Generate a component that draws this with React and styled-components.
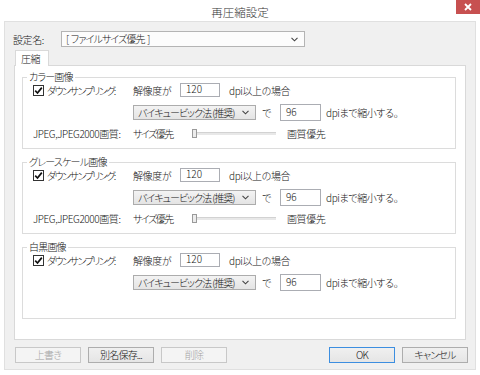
import styled, { createGlobalStyle } from 'styled-components';

const GlobalStyle = createGlobalStyle`
  html, body {
    margin: 0;
    padding: 0;
    background: #fff;
  }
  body {
    font-family: 'Noto Sans CJK JP', 'Noto Sans', sans-serif;
    font-size: 10px;
    font-weight: 300;
    letter-spacing: -0.4px;
    color: #151515;
    font-feature-settings: 'palt';
  }
  * {
    box-sizing: border-box;
  }
`;

const SWindow = styled.div`
  width: 480px;
  height: 375px;
  display: flex;
  flex-direction: column;
  background: #fff;
  overflow: hidden;
`;
const STitleBar = styled.div`
  height: 21px;
  display: grid;
  grid-template-columns: 1fr auto 1fr;
  align-items: start;
`;
const STitle = styled.div`
  grid-column: 2;
  font-size: 11.5px;
  letter-spacing: 0;
  line-height: 24px;
  height: 21px;
  color: #333;
`;
const SClose = styled.div`
  grid-column: 3;
  justify-self: end;
  width: 24px;
  height: 14px;
  background: #c75050;
  display: flex;
  align-items: center;
  justify-content: center;
`;
const SBody = styled.div`
  margin: 0 4px;
  height: 349px;
  background: #f0f0f0;
  border: 1px solid #e0e0e0;
  display: flex;
  flex-direction: column;
`;
const SSettingRow = styled.div`
  display: flex;
  align-items: center;
  height: 16px;
  margin-top: 9px;
  padding-left: 8px;
`;
const SSettingLabel = styled.span`
  width: 48px;
`;
const SCombo = styled.div`
  width: ${(p) => p.$width}px;
  height: ${(p) => p.$height}px;
  flex-shrink: 0;
  display: flex;
  align-items: center;
  padding: 0 6px 0 4px;
  border: 1px solid ${(p) => (p.$light ? '#b4b4b4' : '#acacac')};
  background: ${(p) =>
    p.$light ? '#fcfcfc' : 'linear-gradient(#f3f3f3, #e4e4e4)'};
  white-space: pre;
  line-height: 1;
  letter-spacing: ${(p) => p.$spacing}px;
  svg {
    margin-left: auto;
  }
`;
const STabStrip = styled.div`
  display: flex;
  margin-top: 3px;
  padding-left: 10px;
  margin-bottom: -1px;
  position: relative;
  z-index: 1;
`;
const STab = styled.div`
  width: 34px;
  height: 16px;
  background: #fff;
  border: 1px solid #d9d9d9;
  border-bottom: none;
  padding-left: 5px;
  line-height: 16px;
`;
const SPanel = styled.div`
  margin-left: 9px;
  width: 452px;
  height: 275px;
  background: #fff;
  border: 1px solid #d9d9d9;
  padding: 5px 9px 0 7px;
`;
const SGroup = styled.fieldset`
  margin: ${(p) => (p.$first ? 0 : '7px 0 0')};
  border: 1px solid #dcdcdc;
  padding: 0 10px 8px 10px;
  min-width: 0;
`;
const SLegend = styled.legend`
  margin-left: -6px;
  padding: 0 2px;
  line-height: 12px;
  letter-spacing: -0.8px;
`;
const SRow = styled.div`
  display: flex;
  align-items: center;
  height: ${(p) => p.$h}px;
  margin-top: ${(p) => p.$gap || 0}px;
  white-space: nowrap;
`;
const SCell = styled.span`
  width: ${(p) => p.$w}px;
  flex-shrink: 0;
  display: flex;
  align-items: center;
  gap: 2px;
  letter-spacing: ${(p) => (p.$tight ? '-1.5px' : 'inherit')};
`;
const SCheck = styled.span`
  width: 11px;
  height: 11px;
  margin-right: 1px;
  border: 1px solid #333;
  background: #fff;
  display: flex;
  align-items: center;
  justify-content: center;
`;
const SInput = styled.div`
  width: ${(p) => p.$w}px;
  height: ${(p) => p.$h}px;
  flex-shrink: 0;
  border: 1px solid #abadb3;
  background: #fff;
  padding-left: 5px;
  line-height: ${(p) => p.$h - 4}px;
  letter-spacing: 0;
  margin-left: ${(p) => p.$ml || 0}px;
`;
const SText = styled.span`
  margin-left: ${(p) => p.$ml || 0}px;
`;
const SSlider = styled.div`
  width: 84px;
  display: flex;
  align-items: center;
`;
const SThumb = styled.span`
  width: 5px;
  height: 9px;
  border: 1px solid #9a9a9a;
  background: #ececec;
`;
const STrack = styled.span`
  flex: 1;
  height: 3px;
  background: #e8e8e8;
  border-top: 1px solid #d2d2d2;
`;
const SButtons = styled.div`
  display: flex;
  gap: 7px;
  margin-top: 7px;
  padding: 0 7px 0 10px;
`;
const SButton = styled.button`
  width: 66px;
  height: 16px;
  margin: 0;
  padding: 0;
  font: inherit;
  line-height: 1;
  letter-spacing: -0.8px;
  color: ${(p) => (p.disabled ? '#a3a3a3' : '#151515')};
  border: 1px solid
    ${(p) => (p.$primary ? '#3c8ee0' : p.disabled ? '#c8c8c8' : '#adadad')};
  background: ${(p) =>
    p.disabled ? '#f4f4f4' : 'linear-gradient(#f0f0f0, #e5e5e5)'};
  margin-left: ${(p) => (p.$push ? 'auto' : '0')};
`;

function Chevron() {
  return (
    <svg width="7" height="5" viewBox="0 0 7 5">
      <path d="M0.5 0.8 L3.5 3.8 L6.5 0.8" fill="none" stroke="#444" strokeWidth="1.1" />
    </svg>
  );
}

function CheckMark() {
  return (
    <svg width="9" height="9" viewBox="0 0 9 9">
      <path d="M1.2 4.6 L3.5 7 L7.8 1.6" fill="none" stroke="#111" strokeWidth="1.7" />
    </svg>
  );
}

function Group({ title, first, quality }) {
  return (
    <SGroup $first={first}>
      <SLegend>{title}</SLegend>
      <SRow $h={14}>
        <SCell $w={100} $tight>
          <SCheck>
            <CheckMark />
          </SCheck>
          ダウンサンプリング:
        </SCell>
        <SCell $w={47}>解像度が</SCell>
        <SInput $w={40} $h={14}>120</SInput>
        <SText $ml={9}>dpi以上の場合</SText>
      </SRow>
      <SRow $h={17} $gap={7}>
        <SCell $w={100} />
        <SCombo $width={123} $height={15} $spacing={-1}>
          {'バイキュービック法 (推奨)'}
          <Chevron />
        </SCombo>
        <SCell $w={24}>
          <SText $ml={6}>で</SText>
        </SCell>
        <SInput $w={41} $h={17}>96</SInput>
        <SText $ml={5}>dpiまで縮小する。</SText>
      </SRow>
      <SRow $h={14} $gap={5}>
        {quality && (
          <>
            <SCell $w={100}>JPEG,JPEG2000画質:</SCell>
            <SCell $w={59} $tight>サイズ優先</SCell>
            <SSlider>
              <SThumb />
              <STrack />
            </SSlider>
            <SText $ml={11}>画質優先</SText>
          </>
        )}
      </SRow>
    </SGroup>
  );
}

function App() {
  return (
    <SWindow>
      <GlobalStyle />
      <STitleBar>
        <STitle>再圧縮設定</STitle>
        <SClose>
          <svg width="8" height="8" viewBox="0 0 8 8">
            <path d="M1 1 L7 7 M7 1 L1 7" stroke="#fff" strokeWidth="1.8" />
          </svg>
        </SClose>
      </STitleBar>
      <SBody>
        <SSettingRow>
          <SSettingLabel>設定名:</SSettingLabel>
          <SCombo $width={244} $height={16} $spacing={-0.9} $light>
            {'[  ファイルサイズ優先  ]'}
            <Chevron />
          </SCombo>
        </SSettingRow>
        <STabStrip>
          <STab>圧縮</STab>
        </STabStrip>
        <SPanel>
          <Group title="カラー画像" first quality />
          <Group title="グレースケール画像" quality />
          <Group title="白黒画像" />
        </SPanel>
        <SButtons>
          <SButton disabled>上書き</SButton>
          <SButton>別名保存...</SButton>
          <SButton disabled>削除</SButton>
          <SButton $primary $push>OK</SButton>
          <SButton>キャンセル</SButton>
        </SButtons>
      </SBody>
    </SWindow>
  );
}

export default App;
